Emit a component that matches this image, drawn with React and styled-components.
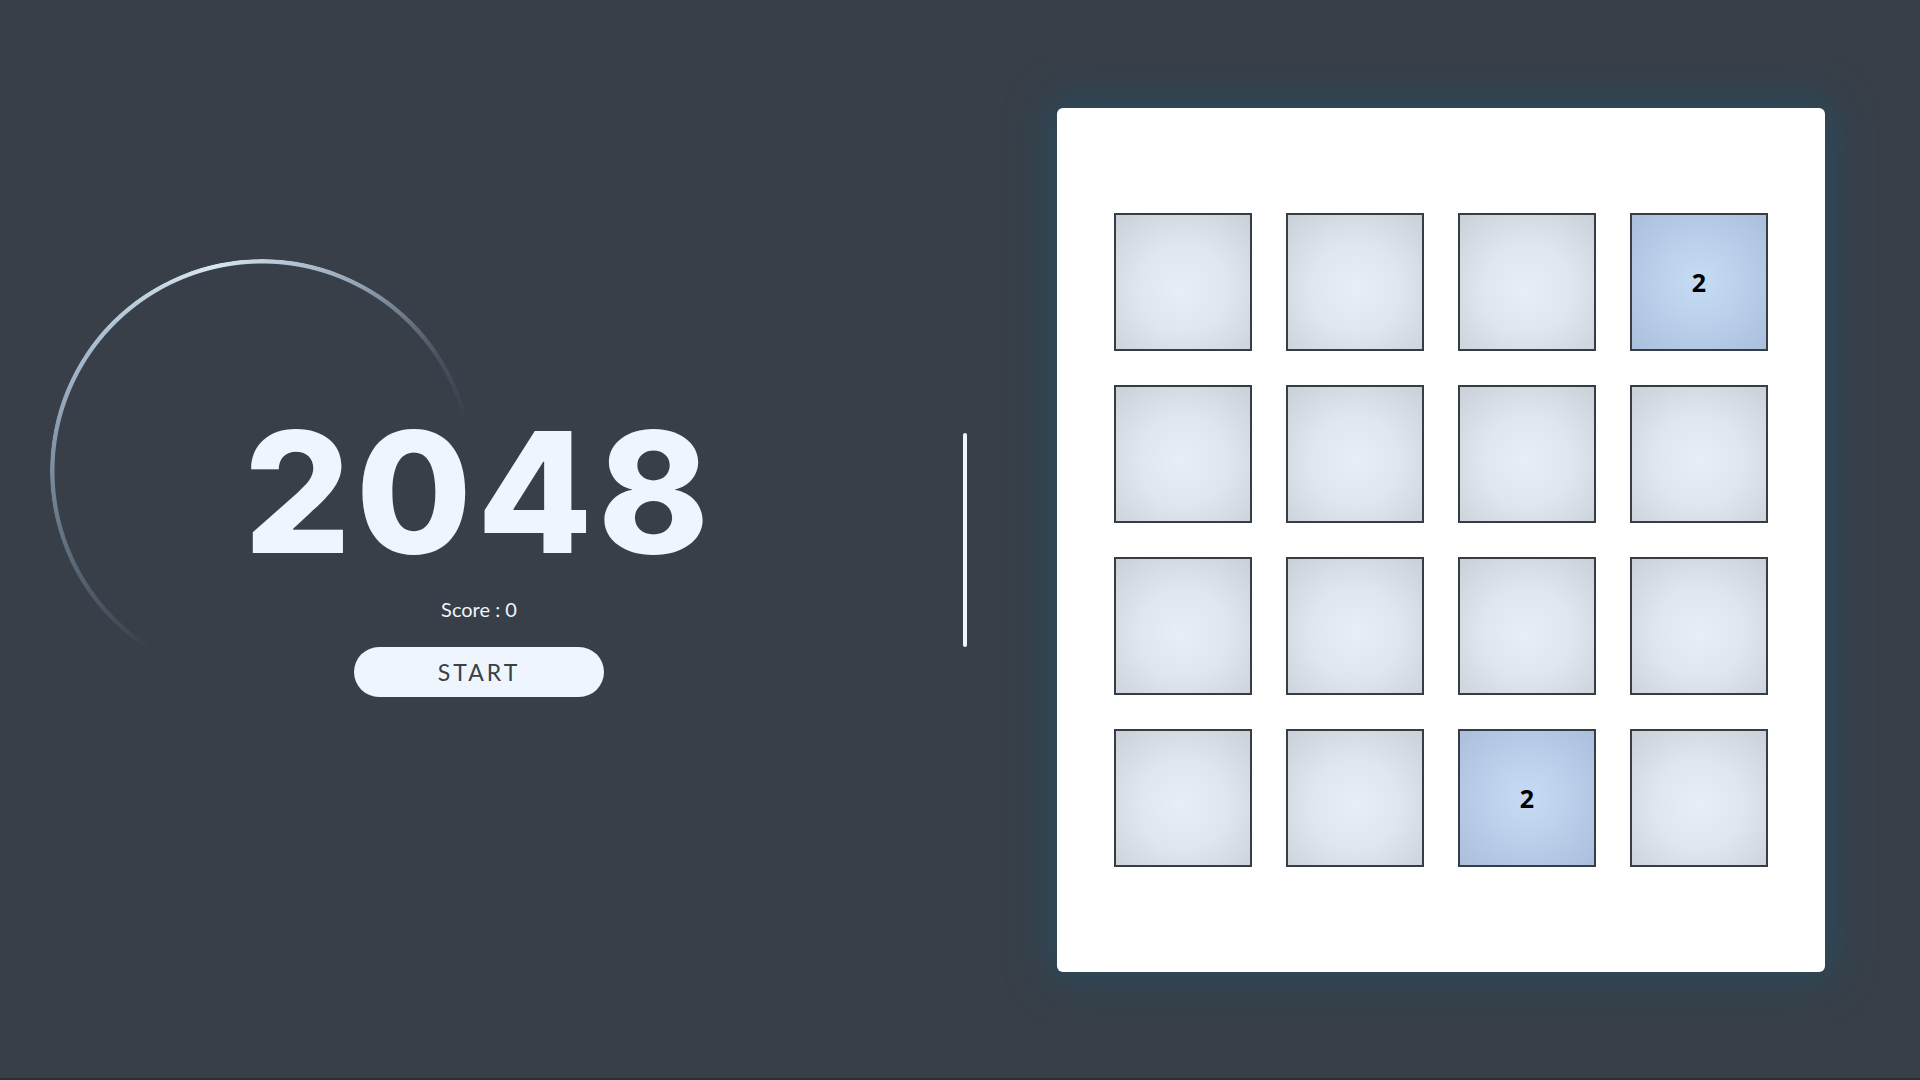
import React from "react";
import styled, { createGlobalStyle } from "styled-components";

const GlobalStyle = createGlobalStyle`
  * { box-sizing: border-box; }
  html, body { margin: 0; padding: 0; }
  body {
    background: #383f48;
    font-family: "Lato", "Noto Sans", sans-serif;
    overflow: hidden;
  }
`;

const Page = styled.div`
  display: grid;
  grid-template-columns: 1fr 4px 1fr;
  align-items: center;
  width: 100vw;
  height: 100vh;
  background: #383f48;
  box-shadow: inset 0 -2px 0 #2a2e33;
`;

const Intro = styled.section`
  position: relative;
  height: 100%;
  display: flex;
  flex-direction: column;
  align-items: center;
  justify-content: center;
  padding-top: 24px;
`;

const Ring = styled.div`
  position: absolute;
  left: 50px;
  top: 259px;
  width: 424px;
  height: 424px;
  border-radius: 50%;
  background: conic-gradient(
    from 212deg,
    rgba(120, 140, 160, 0) 0deg,
    rgba(125, 145, 165, 0.55) 35deg,
    rgba(165, 185, 205, 0.95) 85deg,
    #d8e6f2 135deg,
    rgba(170, 190, 210, 0.8) 175deg,
    rgba(110, 130, 150, 0.3) 205deg,
    rgba(90, 110, 130, 0) 224deg,
    rgba(0, 0, 0, 0) 360deg
  );
  -webkit-mask: radial-gradient(farthest-side, transparent calc(100% - 5px), #000 calc(100% - 4px));
  mask: radial-gradient(farthest-side, transparent calc(100% - 5px), #000 calc(100% - 4px));
  pointer-events: none;
`;

const Title = styled.h1`
  position: relative;
  margin: 0;
  font-family: "Inter", "Noto Sans", sans-serif;
  font-weight: 800;
  font-size: 168px;
  line-height: 1;
  letter-spacing: 5px;
  color: #eef5fc;
`;

const Score = styled.p`
  margin: 21px 0 0;
  font-size: 20px;
  line-height: 24px;
  color: #eef5fc;
`;

const StartButton = styled.button`
  margin-top: 26px;
  width: 250px;
  height: 50px;
  border: none;
  border-radius: 25px;
  background: #eef5fc;
  color: #3a4048;
  font-family: "Lato", "Noto Sans", sans-serif;
  font-size: 23px;
  letter-spacing: 3px;
  cursor: pointer;
`;

const Divider = styled.div`
  width: 4px;
  height: 214px;
  margin-left: 5px;
  border-radius: 2px;
  background: #eef5fc;
`;

const BoardArea = styled.section`
  display: flex;
  align-items: center;
  justify-content: center;
  height: 100%;
`;

const Board = styled.div`
  width: 768px;
  height: 864px;
  background: #ffffff;
  border-radius: 6px;
  box-shadow: 0 0 40px 8px rgba(40, 76, 96, 0.9);
  display: flex;
  align-items: center;
  justify-content: center;
`;

const Grid = styled.div`
  display: grid;
  grid-template-columns: repeat(4, 138px);
  grid-auto-rows: 138px;
  gap: 34px;
`;

const Tile = styled.div`
  display: flex;
  align-items: center;
  justify-content: center;
  border: 2px solid #373d45;
  background: ${({ $filled }) =>
    $filled
      ? "radial-gradient(circle at 50% 50%, #c6dbf3 0%, #bcd1ec 40%, #a9bfdb 100%)"
      : "radial-gradient(circle at 50% 55%, #e8eef5 0%, #dfe6ee 45%, #c9d0d8 100%)"};
  font-family: "Open Sans", "Noto Sans", sans-serif;
  font-weight: 700;
  font-size: 25px;
  color: #000;
`;

const cells = [
  0, 0, 0, 2,
  0, 0, 0, 0,
  0, 0, 0, 0,
  0, 0, 2, 0,
];

export default function App() {
  return (
    <>
      <GlobalStyle />
      <Page>
        <Intro>
          <Ring />
          <Title>2048</Title>
          <Score>Score : 0</Score>
          <StartButton>START</StartButton>
        </Intro>
        <Divider />
        <BoardArea>
          <Board>
            <Grid>
              {cells.map((v, i) => (
                <Tile key={i} $filled={v > 0}>
                  {v > 0 ? v : ""}
                </Tile>
              ))}
            </Grid>
          </Board>
        </BoardArea>
      </Page>
    </>
  );
}
